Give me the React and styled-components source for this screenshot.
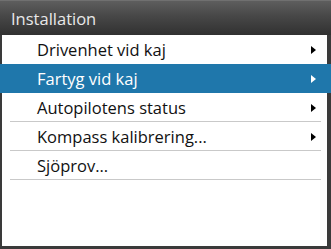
import React from "react";
import styled, { createGlobalStyle } from "styled-components";

const GlobalStyle = createGlobalStyle`
  html, body {
    margin: 0;
    padding: 0;
    background: #3a3a3a;
  }
  body {
    font-family: "Open Sans", "Noto Sans", sans-serif;
  }
`;

const Frame = styled.div`
  width: 331px;
  height: 249px;
  box-sizing: border-box;
  display: flex;
  flex-direction: column;
  background: #3a3a3a;
  padding-bottom: 3px;
  overflow: hidden;
`;

const Header = styled.div`
  height: 35px;
  flex: none;
  display: flex;
  align-items: center;
  padding-left: 11px;
  border-top: 1px solid #707070;
  box-sizing: border-box;
  background: linear-gradient(#5e5e5e, #474747 45%, #313131);
  color: #e8e8e8;
  font-size: 16.5px;
  font-stretch: 88%;
`;

const Body = styled.div`
  flex: 1;
  margin: 0 4px 0 2px;
  background: #fff;
  display: flex;
  flex-direction: column;
`;

const Row = styled.div`
  height: 29px;
  flex: none;
  box-sizing: border-box;
  display: flex;
  align-items: center;
  justify-content: space-between;
  font-size: 16.5px;
  font-stretch: 88%;
  color: ${(p) => (p.$active ? "#fff" : "#111")};
  background: ${(p) => (p.$active ? "#1f77ab" : "transparent")};
  margin: ${(p) => (p.$active ? "0 -4px 0 -2px" : "0")};
  padding-left: ${(p) => (p.$active ? "37px" : "35px")};
  padding-right: ${(p) => (p.$active ? "15px" : "11px")};
  position: relative;
  &::after {
    content: "";
    display: ${(p) => (p.$divider ? "block" : "none")};
    position: absolute;
    left: 8px;
    right: 6px;
    bottom: 0;
    height: 1px;
    background: #c9c9c9;
  }
`;

const Arrow = styled.span`
  width: 0;
  height: 0;
  border-top: 4px solid transparent;
  border-bottom: 4px solid transparent;
  border-left: 5px solid ${(p) => (p.$active ? "#fff" : "#000")};
`;

const items = [
  { label: "Drivenhet vid kaj", arrow: true },
  { label: "Fartyg vid kaj", arrow: true, active: true },
  { label: "Autopilotens status", arrow: true, divider: true },
  { label: "Kompass kalibrering...", arrow: true, divider: true },
  { label: "Sjöprov...", divider: true },
];

export default function App() {
  return (
    <>
      <GlobalStyle />
      <Frame>
        <Header>Installation</Header>
        <Body>
          {items.map((it) => (
            <Row key={it.label} $active={it.active} $divider={it.divider}>
              <span>{it.label}</span>
              {it.arrow && <Arrow $active={it.active} />}
            </Row>
          ))}
        </Body>
      </Frame>
    </>
  );
}
